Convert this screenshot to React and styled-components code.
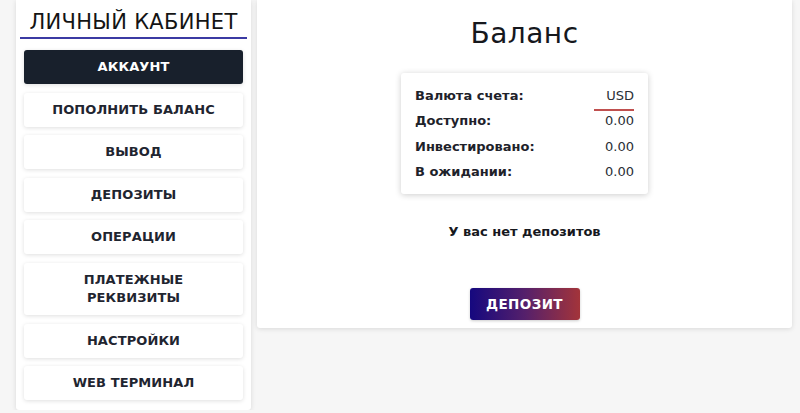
import React from "react";
import styled, { createGlobalStyle } from "styled-components";

const Global = createGlobalStyle`
  html, body { margin: 0; padding: 0; background: #f6f6f6; }
  body { font-family: "DejaVu Sans", "Open Sans", sans-serif; color: #1b1f27; }
`;

const Page = styled.div`
  display: flex;
  align-items: flex-start;
  gap: 6px;
  padding: 0 8px 0 16px;
  width: 800px;
  box-sizing: border-box;
`;

const Sidebar = styled.aside`
  width: 235px;
  flex: none;
  background: #fff;
  box-shadow: 0 1px 5px rgba(0, 0, 0, 0.12);
  padding: 9px 4px 10px 4px;
  box-sizing: border-box;
  border-radius: 0 0 3px 3px;
`;

const Title = styled.h2`
  margin: 0 0 11px;
  padding: 1px 0 3px;
  font-size: 21px;
  font-weight: 400;
  text-align: center;
  color: #141414;
  letter-spacing: 0.3px;
  border-bottom: 2px solid #3b3aa3;
  line-height: 24px;
`;

const Menu = styled.nav`
  display: flex;
  flex-direction: column;
  gap: 8.6px;
  padding: 0 4px;
`;

const MenuItem = styled.a`
  display: flex;
  align-items: center;
  justify-content: center;
  text-align: center;
  min-height: 34px;
  padding: 8px 10px;
  box-sizing: border-box;
  border-radius: 3px;
  font-size: 13px;
  font-weight: 700;
  line-height: 18px;
  letter-spacing: 0.1px;
  text-transform: uppercase;
  background: ${(p) => (p.$active ? "#18202c" : "#fff")};
  color: ${(p) => (p.$active ? "#fff" : "#1f2530")};
  box-shadow: 0 1px 4px rgba(0, 0, 0, 0.13);
`;

const Main = styled.main`
  flex: 1;
  background: #fff;
  box-shadow: 0 1px 5px rgba(0, 0, 0, 0.12);
  border-radius: 0 0 3px 3px;
  display: flex;
  flex-direction: column;
  align-items: center;
  padding: 16px 0 8px;
  height: 328px;
  box-sizing: border-box;
`;

const Heading = styled.h1`
  margin: 0;
  font-size: 28px;
  font-weight: 400;
  line-height: 36px;
  color: #16181d;
  letter-spacing: 0.5px;
`;

const Card = styled.div`
  margin-top: 21px;
  width: 247px;
  box-sizing: border-box;
  padding: 14px 14px 13px 14px;
  background: #fff;
  border-radius: 3px;
  box-shadow: 0 1px 6px rgba(0, 0, 0, 0.2);
  display: flex;
  flex-direction: column;
  gap: 7.3px;
`;

const Row = styled.div`
  display: flex;
  justify-content: space-between;
  align-items: center;
  font-size: 13px;
  line-height: 18px;
`;

const Label = styled.span`
  font-weight: 700;
  color: #1e222a;
`;

const Value = styled.span`
  color: #2a2e36;
  font-weight: 400;
  padding: 0 0 ${(p) => (p.$underline ? "4px" : "0")} 12px;
  border-bottom: ${(p) => (p.$underline ? "2px solid #c0504f" : "none")};
  margin-bottom: ${(p) => (p.$underline ? "-6px" : "0")};
`;

const Empty = styled.p`
  margin: 30px 0 0;
  font-size: 13px;
  font-weight: 700;
  color: #16181d;
`;

const DepositButton = styled.button`
  margin-top: 49px;
  width: 110px;
  height: 33px;
  border: none;
  border-radius: 3px;
  background: linear-gradient(90deg, #15087f 0%, #55206b 50%, #a3343a 100%);
  color: #fff;
  font-family: inherit;
  font-size: 13.5px;
  font-weight: 700;
  letter-spacing: 0.4px;
  box-shadow: 0 1px 3px rgba(0, 0, 0, 0.2);
`;

const items = [
  "Аккаунт",
  "Пополнить баланс",
  "Вывод",
  "Депозиты",
  "Операции",
  "Платежные реквизиты",
  "Настройки",
  "Web терминал",
];

const rows = [
  ["Валюта счета:", "USD"],
  ["Доступно:", "0.00"],
  ["Инвестировано:", "0.00"],
  ["В ожидании:", "0.00"],
];

export default function App() {
  return (
    <>
      <Global />
      <Page>
        <Sidebar>
          <Title>ЛИЧНЫЙ КАБИНЕТ</Title>
          <Menu>
            {items.map((t, i) => (
              <MenuItem key={t} $active={i === 0}>
                {i === 5 ? (
                  <span>
                    Платежные
                    <br />
                    реквизиты
                  </span>
                ) : (
                  t
                )}
              </MenuItem>
            ))}
          </Menu>
        </Sidebar>
        <Main>
          <Heading>Баланс</Heading>
          <Card>
            {rows.map(([l, v], i) => (
              <Row key={l}>
                <Label>{l}</Label>
                <Value $underline={i === 0}>{v}</Value>
              </Row>
            ))}
          </Card>
          <Empty>У вас нет депозитов</Empty>
          <DepositButton>ДЕПОЗИТ</DepositButton>
        </Main>
      </Page>
    </>
  );
}
